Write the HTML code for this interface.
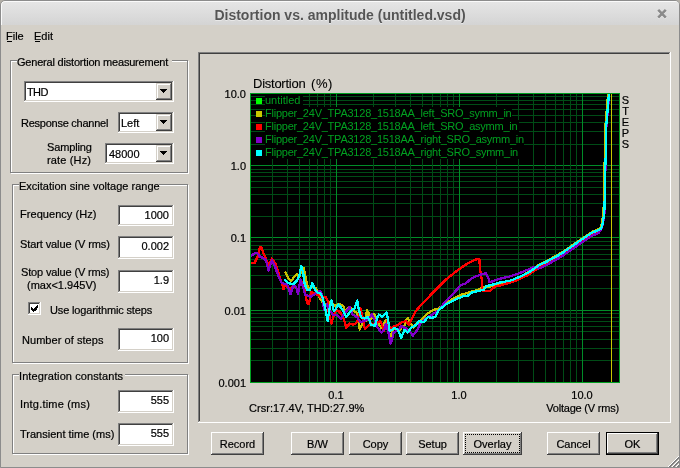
<!DOCTYPE html><html><head><meta charset="utf-8"><style>html,body{margin:0;padding:0;}body{width:680px;height:468px;overflow:hidden;position:relative;background:#b3afa7;}#w{position:absolute;left:0;top:0;width:680px;height:468px;will-change:transform;}</style></head><body><div id="w">
<div style="position:absolute;left:0;top:0;width:678px;height:466px;border:1px solid #8c8c8c;border-radius:5px 5px 0 0;background:#d4d0c8;overflow:hidden;">
<div style="position:absolute;left:0;top:0;width:678px;height:23px;background:linear-gradient(#e5e5e5,#d4d4d4);border-top:1px solid #fafafa;border-left:1px solid #fafafa;border-radius:4px 4px 0 0;"></div>
</div>
<div style="position:absolute;left:0;top:7px;width:680px;text-align:center;font:bold 14px/16px 'Liberation Sans',sans-serif;color:#555555;white-space:pre;text-shadow:0 1px 0 rgba(255,255,255,0.45);">Distortion vs. amplitude (untitled.vsd)</div>
<svg style="position:absolute;left:656px;top:8px" width="12" height="13" viewBox="0 0 12 13"><path d="M2.2 2.6 L9.8 10.4 M9.8 2.6 L2.2 10.4" stroke="#ffffff" stroke-opacity="0.6" stroke-width="2.6"/><path d="M2.2 1.8 L9.8 9.6 M9.8 1.8 L2.2 9.6" stroke="#8a8a8a" stroke-width="2.6"/></svg>
<div style="position:absolute;left:6px;top:30px;font:normal 11px/13px 'Liberation Sans',sans-serif;color:#000;white-space:pre;-webkit-text-stroke-width:0.2px;">File</div>
<div style="position:absolute;left:7px;top:41px;width:5px;height:1px;background:#000;"></div>
<div style="position:absolute;left:34px;top:30px;font:normal 11px/13px 'Liberation Sans',sans-serif;color:#000;white-space:pre;-webkit-text-stroke-width:0.2px;">Edit</div>
<div style="position:absolute;left:35px;top:41px;width:5px;height:1px;background:#000;"></div>
<div style="position:absolute;left:11px;top:61px;width:176px;height:111px;border:1px solid #fff;"></div>
<div style="position:absolute;left:10px;top:60px;width:176px;height:111px;border:1px solid #808080;"></div>
<div style="position:absolute;left:17px;top:58px;width:155px;height:6px;background:#d4d0c8;"></div>
<div style="position:absolute;left:17px;top:56px;font:normal 11px/13px 'Liberation Sans',sans-serif;color:#000;white-space:pre;-webkit-text-stroke-width:0.2px;letter-spacing:-0.2px;">General distortion measurement</div>
<div style="position:absolute;left:24px;top:81px;width:150px;height:21px;background:#fff;"></div>
<div style="position:absolute;left:24px;top:81px;width:149px;height:20px;background:#808080;"></div>
<div style="position:absolute;left:25px;top:82px;width:148px;height:19px;background:#d4d0c8;"></div>
<div style="position:absolute;left:25px;top:82px;width:147px;height:18px;background:#404040;"></div>
<div style="position:absolute;left:26px;top:83px;width:146px;height:17px;background:#fff;"></div>
<div style="position:absolute;left:156px;top:83px;width:16px;height:17px;background:#404040;"></div>
<div style="position:absolute;left:156px;top:83px;width:15px;height:16px;background:#d4d0c8;"></div>
<div style="position:absolute;left:157px;top:84px;width:14px;height:15px;background:#808080;"></div>
<div style="position:absolute;left:157px;top:84px;width:13px;height:14px;background:#fff;"></div>
<div style="position:absolute;left:158px;top:85px;width:12px;height:13px;background:#d4d0c8;"></div>
<div style="position:absolute;left:160px;top:89px;width:7px;height:1px;background:#000;"></div>
<div style="position:absolute;left:161px;top:90px;width:5px;height:1px;background:#000;"></div>
<div style="position:absolute;left:162px;top:91px;width:3px;height:1px;background:#000;"></div>
<div style="position:absolute;left:163px;top:92px;width:1px;height:1px;background:#000;"></div>
<div style="position:absolute;left:27px;top:86px;font:normal 11px/13px 'Liberation Sans',sans-serif;color:#000;white-space:pre;-webkit-text-stroke-width:0.2px;letter-spacing:-0.6px;">THD</div>
<div style="position:absolute;left:21px;top:117px;font:normal 11px/13px 'Liberation Sans',sans-serif;color:#000;white-space:pre;-webkit-text-stroke-width:0.2px;letter-spacing:-0.25px;">Response channel</div>
<div style="position:absolute;left:118px;top:112px;width:56px;height:21px;background:#fff;"></div>
<div style="position:absolute;left:118px;top:112px;width:55px;height:20px;background:#808080;"></div>
<div style="position:absolute;left:119px;top:113px;width:54px;height:19px;background:#d4d0c8;"></div>
<div style="position:absolute;left:119px;top:113px;width:53px;height:18px;background:#404040;"></div>
<div style="position:absolute;left:120px;top:114px;width:52px;height:17px;background:#fff;"></div>
<div style="position:absolute;left:156px;top:114px;width:16px;height:17px;background:#404040;"></div>
<div style="position:absolute;left:156px;top:114px;width:15px;height:16px;background:#d4d0c8;"></div>
<div style="position:absolute;left:157px;top:115px;width:14px;height:15px;background:#808080;"></div>
<div style="position:absolute;left:157px;top:115px;width:13px;height:14px;background:#fff;"></div>
<div style="position:absolute;left:158px;top:116px;width:12px;height:13px;background:#d4d0c8;"></div>
<div style="position:absolute;left:160px;top:120px;width:7px;height:1px;background:#000;"></div>
<div style="position:absolute;left:161px;top:121px;width:5px;height:1px;background:#000;"></div>
<div style="position:absolute;left:162px;top:122px;width:3px;height:1px;background:#000;"></div>
<div style="position:absolute;left:163px;top:123px;width:1px;height:1px;background:#000;"></div>
<div style="position:absolute;left:121px;top:117px;font:normal 11px/13px 'Liberation Sans',sans-serif;color:#000;white-space:pre;-webkit-text-stroke-width:0.2px;">Left</div>
<div style="position:absolute;left:47px;top:141px;font:normal 11px/13px 'Liberation Sans',sans-serif;color:#000;white-space:pre;-webkit-text-stroke-width:0.2px;letter-spacing:-0.15px;">Sampling</div>
<div style="position:absolute;left:47px;top:154px;font:normal 11px/13px 'Liberation Sans',sans-serif;color:#000;white-space:pre;-webkit-text-stroke-width:0.2px;letter-spacing:0.15px;">rate (Hz)</div>
<div style="position:absolute;left:105px;top:143px;width:69px;height:21px;background:#fff;"></div>
<div style="position:absolute;left:105px;top:143px;width:68px;height:20px;background:#808080;"></div>
<div style="position:absolute;left:106px;top:144px;width:67px;height:19px;background:#d4d0c8;"></div>
<div style="position:absolute;left:106px;top:144px;width:66px;height:18px;background:#404040;"></div>
<div style="position:absolute;left:107px;top:145px;width:65px;height:17px;background:#fff;"></div>
<div style="position:absolute;left:156px;top:145px;width:16px;height:17px;background:#404040;"></div>
<div style="position:absolute;left:156px;top:145px;width:15px;height:16px;background:#d4d0c8;"></div>
<div style="position:absolute;left:157px;top:146px;width:14px;height:15px;background:#808080;"></div>
<div style="position:absolute;left:157px;top:146px;width:13px;height:14px;background:#fff;"></div>
<div style="position:absolute;left:158px;top:147px;width:12px;height:13px;background:#d4d0c8;"></div>
<div style="position:absolute;left:160px;top:151px;width:7px;height:1px;background:#000;"></div>
<div style="position:absolute;left:161px;top:152px;width:5px;height:1px;background:#000;"></div>
<div style="position:absolute;left:162px;top:153px;width:3px;height:1px;background:#000;"></div>
<div style="position:absolute;left:163px;top:154px;width:1px;height:1px;background:#000;"></div>
<div style="position:absolute;left:109px;top:148px;font:normal 11px/13px 'Liberation Sans',sans-serif;color:#000;white-space:pre;-webkit-text-stroke-width:0.2px;">48000</div>
<div style="position:absolute;left:13px;top:185px;width:174px;height:177px;border:1px solid #fff;"></div>
<div style="position:absolute;left:12px;top:184px;width:174px;height:177px;border:1px solid #808080;"></div>
<div style="position:absolute;left:19px;top:182px;width:140px;height:6px;background:#d4d0c8;"></div>
<div style="position:absolute;left:19px;top:180px;font:normal 11px/13px 'Liberation Sans',sans-serif;color:#000;white-space:pre;-webkit-text-stroke-width:0.2px;letter-spacing:0.0px;">Excitation sine voltage range</div>
<div style="position:absolute;left:20px;top:208px;font:normal 11px/13px 'Liberation Sans',sans-serif;color:#000;white-space:pre;-webkit-text-stroke-width:0.2px;letter-spacing:0.05px;">Frequency (Hz)</div>
<div style="position:absolute;left:118px;top:205px;width:56px;height:21px;background:#fff;"></div>
<div style="position:absolute;left:118px;top:205px;width:55px;height:20px;background:#808080;"></div>
<div style="position:absolute;left:119px;top:206px;width:54px;height:19px;background:#d4d0c8;"></div>
<div style="position:absolute;left:119px;top:206px;width:53px;height:18px;background:#404040;"></div>
<div style="position:absolute;left:120px;top:207px;width:52px;height:17px;background:#fff;"></div>
<div style="position:absolute;left:109px;top:209px;font:normal 11px/13px 'Liberation Sans',sans-serif;color:#000;white-space:pre;-webkit-text-stroke-width:0.2px;width:60px;text-align:right;">1000</div>
<div style="position:absolute;left:20px;top:238px;font:normal 11px/13px 'Liberation Sans',sans-serif;color:#000;white-space:pre;-webkit-text-stroke-width:0.2px;letter-spacing:-0.1px;">Start value (V rms)</div>
<div style="position:absolute;left:118px;top:236px;width:56px;height:23px;background:#fff;"></div>
<div style="position:absolute;left:118px;top:236px;width:55px;height:22px;background:#808080;"></div>
<div style="position:absolute;left:119px;top:237px;width:54px;height:21px;background:#d4d0c8;"></div>
<div style="position:absolute;left:119px;top:237px;width:53px;height:20px;background:#404040;"></div>
<div style="position:absolute;left:120px;top:238px;width:52px;height:19px;background:#fff;"></div>
<div style="position:absolute;left:109px;top:240px;font:normal 11px/13px 'Liberation Sans',sans-serif;color:#000;white-space:pre;-webkit-text-stroke-width:0.2px;width:60px;text-align:right;">0.002</div>
<div style="position:absolute;left:21px;top:266px;font:normal 11px/13px 'Liberation Sans',sans-serif;color:#000;white-space:pre;-webkit-text-stroke-width:0.2px;letter-spacing:-0.15px;">Stop value (V rms)</div>
<div style="position:absolute;left:27px;top:279px;font:normal 11px/13px 'Liberation Sans',sans-serif;color:#000;white-space:pre;-webkit-text-stroke-width:0.2px;">(max&lt;1.945V)</div>
<div style="position:absolute;left:118px;top:270px;width:56px;height:23px;background:#fff;"></div>
<div style="position:absolute;left:118px;top:270px;width:55px;height:22px;background:#808080;"></div>
<div style="position:absolute;left:119px;top:271px;width:54px;height:21px;background:#d4d0c8;"></div>
<div style="position:absolute;left:119px;top:271px;width:53px;height:20px;background:#404040;"></div>
<div style="position:absolute;left:120px;top:272px;width:52px;height:19px;background:#fff;"></div>
<div style="position:absolute;left:109px;top:274px;font:normal 11px/13px 'Liberation Sans',sans-serif;color:#000;white-space:pre;-webkit-text-stroke-width:0.2px;width:60px;text-align:right;">1.9</div>
<div style="position:absolute;left:28px;top:302px;width:13px;height:13px;background:#fff;"></div>
<div style="position:absolute;left:28px;top:302px;width:12px;height:12px;background:#808080;"></div>
<div style="position:absolute;left:29px;top:303px;width:11px;height:11px;background:#d4d0c8;"></div>
<div style="position:absolute;left:29px;top:303px;width:10px;height:10px;background:#404040;"></div>
<div style="position:absolute;left:30px;top:304px;width:9px;height:9px;background:#fff;"></div>
<svg style="position:absolute;left:31px;top:305px" width="7" height="7" viewBox="0 0 7 7" shape-rendering="crispEdges"><path fill="#000" d="M6 0h1v3h-1zM5 1h1v4h-1zM4 2h1v4h-1zM3 3h1v3h-1zM2 4h1v3h-1zM1 3h1v3h-1zM0 2h1v3h-1z"/></svg>
<div style="position:absolute;left:50px;top:304px;font:normal 11px/13px 'Liberation Sans',sans-serif;color:#000;white-space:pre;-webkit-text-stroke-width:0.2px;letter-spacing:-0.15px;">Use logarithmic steps</div>
<div style="position:absolute;left:22px;top:334px;font:normal 11px/13px 'Liberation Sans',sans-serif;color:#000;white-space:pre;-webkit-text-stroke-width:0.2px;letter-spacing:0.05px;">Number of steps</div>
<div style="position:absolute;left:118px;top:328px;width:56px;height:23px;background:#fff;"></div>
<div style="position:absolute;left:118px;top:328px;width:55px;height:22px;background:#808080;"></div>
<div style="position:absolute;left:119px;top:329px;width:54px;height:21px;background:#d4d0c8;"></div>
<div style="position:absolute;left:119px;top:329px;width:53px;height:20px;background:#404040;"></div>
<div style="position:absolute;left:120px;top:330px;width:52px;height:19px;background:#fff;"></div>
<div style="position:absolute;left:109px;top:332px;font:normal 11px/13px 'Liberation Sans',sans-serif;color:#000;white-space:pre;-webkit-text-stroke-width:0.2px;width:60px;text-align:right;">100</div>
<div style="position:absolute;left:13px;top:375px;width:174px;height:78px;border:1px solid #fff;"></div>
<div style="position:absolute;left:12px;top:374px;width:174px;height:78px;border:1px solid #808080;"></div>
<div style="position:absolute;left:19px;top:372px;width:106px;height:6px;background:#d4d0c8;"></div>
<div style="position:absolute;left:19px;top:370px;font:normal 11px/13px 'Liberation Sans',sans-serif;color:#000;white-space:pre;-webkit-text-stroke-width:0.2px;letter-spacing:0.1px;">Integration constants</div>
<div style="position:absolute;left:20px;top:398px;font:normal 11px/13px 'Liberation Sans',sans-serif;color:#000;white-space:pre;-webkit-text-stroke-width:0.2px;letter-spacing:0.2px;">Intg.time (ms)</div>
<div style="position:absolute;left:118px;top:390px;width:56px;height:23px;background:#fff;"></div>
<div style="position:absolute;left:118px;top:390px;width:55px;height:22px;background:#808080;"></div>
<div style="position:absolute;left:119px;top:391px;width:54px;height:21px;background:#d4d0c8;"></div>
<div style="position:absolute;left:119px;top:391px;width:53px;height:20px;background:#404040;"></div>
<div style="position:absolute;left:120px;top:392px;width:52px;height:19px;background:#fff;"></div>
<div style="position:absolute;left:109px;top:394px;font:normal 11px/13px 'Liberation Sans',sans-serif;color:#000;white-space:pre;-webkit-text-stroke-width:0.2px;width:60px;text-align:right;">555</div>
<div style="position:absolute;left:20px;top:428px;font:normal 11px/13px 'Liberation Sans',sans-serif;color:#000;white-space:pre;-webkit-text-stroke-width:0.2px;letter-spacing:0.0px;">Transient time (ms)</div>
<div style="position:absolute;left:118px;top:423px;width:56px;height:23px;background:#fff;"></div>
<div style="position:absolute;left:118px;top:423px;width:55px;height:22px;background:#808080;"></div>
<div style="position:absolute;left:119px;top:424px;width:54px;height:21px;background:#d4d0c8;"></div>
<div style="position:absolute;left:119px;top:424px;width:53px;height:20px;background:#404040;"></div>
<div style="position:absolute;left:120px;top:425px;width:52px;height:19px;background:#fff;"></div>
<div style="position:absolute;left:109px;top:427px;font:normal 11px/13px 'Liberation Sans',sans-serif;color:#000;white-space:pre;-webkit-text-stroke-width:0.2px;width:60px;text-align:right;">555</div>
<div style="position:absolute;left:198px;top:52px;width:473px;height:371px;background:#fff;"></div>
<div style="position:absolute;left:198px;top:52px;width:472px;height:370px;background:#808080;"></div>
<div style="position:absolute;left:199px;top:53px;width:471px;height:369px;background:#d4d0c8;"></div>
<div style="position:absolute;left:199px;top:53px;width:470px;height:368px;background:#404040;"></div>
<div style="position:absolute;left:200px;top:54px;width:469px;height:367px;background:#d4d0c8;"></div>
<div style="position:absolute;left:253px;top:77px;font:normal 13px/13px 'Liberation Sans',sans-serif;color:#000;white-space:pre;-webkit-text-stroke-width:0.1px;letter-spacing:-0.25px;">Distortion</div>
<div style="position:absolute;left:311px;top:77px;font:normal 13px/13px 'Liberation Sans',sans-serif;color:#000;white-space:pre;-webkit-text-stroke-width:0.1px;letter-spacing:0.6px;">(%)</div>
<div style="position:absolute;left:186px;top:88px;font:normal 11px/13px 'Liberation Sans',sans-serif;color:#000;white-space:pre;-webkit-text-stroke-width:0.2px;width:60px;text-align:right;">10.0</div>
<div style="position:absolute;left:186px;top:160px;font:normal 11px/13px 'Liberation Sans',sans-serif;color:#000;white-space:pre;-webkit-text-stroke-width:0.2px;width:60px;text-align:right;">1.0</div>
<div style="position:absolute;left:186px;top:232px;font:normal 11px/13px 'Liberation Sans',sans-serif;color:#000;white-space:pre;-webkit-text-stroke-width:0.2px;width:60px;text-align:right;">0.1</div>
<div style="position:absolute;left:186px;top:305px;font:normal 11px/13px 'Liberation Sans',sans-serif;color:#000;white-space:pre;-webkit-text-stroke-width:0.2px;width:60px;text-align:right;">0.01</div>
<div style="position:absolute;left:186px;top:377px;font:normal 11px/13px 'Liberation Sans',sans-serif;color:#000;white-space:pre;-webkit-text-stroke-width:0.2px;width:60px;text-align:right;">0.001</div>
<div style="position:absolute;left:306px;top:389px;font:normal 11px/13px 'Liberation Sans',sans-serif;color:#000;white-space:pre;-webkit-text-stroke-width:0.2px;width:60px;text-align:center;">0.1</div>
<div style="position:absolute;left:429px;top:389px;font:normal 11px/13px 'Liberation Sans',sans-serif;color:#000;white-space:pre;-webkit-text-stroke-width:0.2px;width:60px;text-align:center;">1.0</div>
<div style="position:absolute;left:552px;top:389px;font:normal 11px/13px 'Liberation Sans',sans-serif;color:#000;white-space:pre;-webkit-text-stroke-width:0.2px;width:60px;text-align:center;">10.0</div>
<div style="position:absolute;left:249px;top:402px;font:normal 11px/13px 'Liberation Sans',sans-serif;color:#000;white-space:pre;-webkit-text-stroke-width:0.2px;letter-spacing:0.05px;">Crsr:17.4V, THD:27.9%</div>
<div style="position:absolute;left:519px;top:402px;font:normal 11px/13px 'Liberation Sans',sans-serif;color:#000;white-space:pre;-webkit-text-stroke-width:0.2px;letter-spacing:-0.2px;width:100px;text-align:right;">Voltage (V rms)</div>
<div style="position:absolute;left:621px;top:94px;font:normal 11px/13px 'Liberation Sans',sans-serif;color:#000;white-space:pre;-webkit-text-stroke-width:0.2px;width:9px;text-align:center;">S</div>
<div style="position:absolute;left:621px;top:105px;font:normal 11px/13px 'Liberation Sans',sans-serif;color:#000;white-space:pre;-webkit-text-stroke-width:0.2px;width:9px;text-align:center;">T</div>
<div style="position:absolute;left:621px;top:116px;font:normal 11px/13px 'Liberation Sans',sans-serif;color:#000;white-space:pre;-webkit-text-stroke-width:0.2px;width:9px;text-align:center;">E</div>
<div style="position:absolute;left:621px;top:127px;font:normal 11px/13px 'Liberation Sans',sans-serif;color:#000;white-space:pre;-webkit-text-stroke-width:0.2px;width:9px;text-align:center;">P</div>
<div style="position:absolute;left:621px;top:138px;font:normal 11px/13px 'Liberation Sans',sans-serif;color:#000;white-space:pre;-webkit-text-stroke-width:0.2px;width:9px;text-align:center;">S</div>
<svg style="position:absolute;left:250px;top:93px" width="370" height="290" viewBox="250 93 370 290" shape-rendering="crispEdges"><rect x="250" y="93" width="370" height="290" fill="#000"/><rect x="250" y="144" width="370" height="1" fill="#004c16"/><rect x="250" y="131" width="370" height="1" fill="#004c16"/><rect x="250" y="122" width="370" height="1" fill="#004c16"/><rect x="250" y="115" width="370" height="1" fill="#004c16"/><rect x="250" y="109" width="370" height="1" fill="#004c16"/><rect x="250" y="104" width="370" height="1" fill="#004c16"/><rect x="250" y="100" width="370" height="1" fill="#004c16"/><rect x="250" y="96" width="370" height="1" fill="#004c16"/><rect x="250" y="216" width="370" height="1" fill="#004c16"/><rect x="250" y="203" width="370" height="1" fill="#004c16"/><rect x="250" y="194" width="370" height="1" fill="#004c16"/><rect x="250" y="187" width="370" height="1" fill="#004c16"/><rect x="250" y="181" width="370" height="1" fill="#004c16"/><rect x="250" y="176" width="370" height="1" fill="#004c16"/><rect x="250" y="172" width="370" height="1" fill="#004c16"/><rect x="250" y="169" width="370" height="1" fill="#004c16"/><rect x="250" y="288" width="370" height="1" fill="#004c16"/><rect x="250" y="275" width="370" height="1" fill="#004c16"/><rect x="250" y="266" width="370" height="1" fill="#004c16"/><rect x="250" y="259" width="370" height="1" fill="#004c16"/><rect x="250" y="254" width="370" height="1" fill="#004c16"/><rect x="250" y="249" width="370" height="1" fill="#004c16"/><rect x="250" y="245" width="370" height="1" fill="#004c16"/><rect x="250" y="241" width="370" height="1" fill="#004c16"/><rect x="250" y="360" width="370" height="1" fill="#004c16"/><rect x="250" y="348" width="370" height="1" fill="#004c16"/><rect x="250" y="339" width="370" height="1" fill="#004c16"/><rect x="250" y="331" width="370" height="1" fill="#004c16"/><rect x="250" y="326" width="370" height="1" fill="#004c16"/><rect x="250" y="321" width="370" height="1" fill="#004c16"/><rect x="250" y="317" width="370" height="1" fill="#004c16"/><rect x="250" y="313" width="370" height="1" fill="#004c16"/><rect x="250" y="165" width="370" height="1" fill="#008c28"/><rect x="250" y="237" width="370" height="1" fill="#008c28"/><rect x="250" y="310" width="370" height="1" fill="#008c28"/><rect x="272" y="93" width="1" height="290" fill="#004c16"/><rect x="287" y="93" width="1" height="290" fill="#004c16"/><rect x="299" y="93" width="1" height="290" fill="#004c16"/><rect x="309" y="93" width="1" height="290" fill="#004c16"/><rect x="317" y="93" width="1" height="290" fill="#004c16"/><rect x="324" y="93" width="1" height="290" fill="#004c16"/><rect x="330" y="93" width="1" height="290" fill="#004c16"/><rect x="373" y="93" width="1" height="290" fill="#004c16"/><rect x="395" y="93" width="1" height="290" fill="#004c16"/><rect x="410" y="93" width="1" height="290" fill="#004c16"/><rect x="422" y="93" width="1" height="290" fill="#004c16"/><rect x="432" y="93" width="1" height="290" fill="#004c16"/><rect x="440" y="93" width="1" height="290" fill="#004c16"/><rect x="447" y="93" width="1" height="290" fill="#004c16"/><rect x="453" y="93" width="1" height="290" fill="#004c16"/><rect x="496" y="93" width="1" height="290" fill="#004c16"/><rect x="518" y="93" width="1" height="290" fill="#004c16"/><rect x="533" y="93" width="1" height="290" fill="#004c16"/><rect x="545" y="93" width="1" height="290" fill="#004c16"/><rect x="555" y="93" width="1" height="290" fill="#004c16"/><rect x="563" y="93" width="1" height="290" fill="#004c16"/><rect x="570" y="93" width="1" height="290" fill="#004c16"/><rect x="576" y="93" width="1" height="290" fill="#004c16"/><rect x="336" y="93" width="1" height="290" fill="#008c28"/><rect x="459" y="93" width="1" height="290" fill="#008c28"/><rect x="582" y="93" width="1" height="290" fill="#008c28"/><rect x="256" y="98" width="6" height="6" fill="#00ff00"/><rect x="265" y="94" width="38" height="13" fill="#000"/><rect x="256" y="111" width="6" height="6" fill="#c8c800"/><rect x="265" y="107" width="247" height="13" fill="#000"/><rect x="256" y="124" width="6" height="6" fill="#ff0000"/><rect x="265" y="120" width="254" height="13" fill="#000"/><rect x="256" y="137" width="6" height="6" fill="#8000c8"/><rect x="265" y="133" width="259" height="13" fill="#000"/><rect x="256" y="150" width="6" height="6" fill="#00ffff"/><rect x="265" y="146" width="254" height="13" fill="#000"/><rect x="611" y="93" width="1" height="290" fill="#c8c800"/><polyline points="285.3,272.4 288.5,278.2 291.0,281.4 294.2,276.9 296.8,274.4 299.4,276.9 302.0,269.2 303.8,268.0 305.8,278.2 307.7,287.2 310.0,288.5 312.0,287.0 316.0,288.0 320.0,299.0 325.0,305.0 330.0,302.0 335.0,306.0 339.0,303.7 343.0,305.6 345.6,312.0 348.8,307.0 351.4,308.8 357.2,313.3 359.0,322.3 359.7,329.4 363.6,321.0 366.0,321.0 366.8,310.0 368.7,313.3 370.6,319.7 373.8,314.0 375.0,315.3 377.6,322.3 381.4,328.0 383.3,324.9 385.9,319.7 387.2,324.9 389.1,331.3 390.4,337.7 393.0,328.7 395.5,328.7 398.7,331.3 401.9,327.4 405.1,324.9 406.4,319.7 407.7,317.8 409.6,322.3 413.5,327.4 417.3,322.9 421.2,320.4 426.3,314.6 431.4,310.8 435.0,309.5 439.0,308.3 446.7,302.6 453.1,298.7 460.8,294.9 467.2,292.9 473.6,291.0 478.7,289.7 482.6,287.2 486.4,287.2 490.0,286.5 497.8,283.5 504.2,282.0 510.6,280.5 517.0,278.0 523.5,275.0 528.6,272.0 533.7,268.5 538.8,265.0 545.0,261.8 551.5,258.4 561.8,252.5 566.9,249.0 572.8,245.0 579.2,240.5 585.6,236.2 592.0,231.9 595.2,230.6 598.4,229.4 600.3,228.6 601.4,225.7 602.4,220.3 603.5,212.0 603.9,200.0 604.2,173.0 605.2,150.0 605.2,128.0 606.2,117.0 607.2,105.0 608.2,93.0" fill="none" stroke="#c8c000" stroke-width="2.3" stroke-linejoin="round" stroke-linecap="round" shape-rendering="crispEdges"/><polyline points="251.0,263.0 254.5,263.0 258.0,256.0 260.0,247.0 261.5,247.0 263.0,252.0 266.0,259.0 268.6,265.4 271.8,258.5 275.6,264.0 278.8,274.0 282.0,284.0 283.5,289.0 285.3,285.0 290.0,289.0 294.0,286.0 298.0,290.0 301.0,281.0 304.0,287.0 307.0,303.0 309.0,304.0 311.0,292.0 314.0,293.0 319.0,296.0 322.6,298.0 325.8,296.7 327.7,300.5 328.3,310.8 331.5,323.6 333.5,316.0 336.7,309.5 341.0,313.3 343.7,318.5 346.3,328.0 349.5,323.6 353.3,324.9 357.2,322.3 360.4,308.2 362.3,316.0 364.9,329.4 368.0,326.2 371.3,323.6 375.1,324.9 377.6,322.3 380.1,321.0 382.0,324.9 384.0,331.3 387.2,321.0 388.5,326.2 391.7,328.0 394.2,326.2 398.0,324.9 401.9,322.3 405.8,321.0 409.0,324.9 412.2,318.5 416.0,310.8 421.2,305.0 426.3,299.9 431.4,294.1 437.7,287.8 445.4,280.1 453.1,273.7 460.8,268.0 468.5,262.8 474.9,259.6 479.4,259.0 480.0,269.2 481.9,280.8 482.6,291.0 490.0,291.0 495.3,286.4 501.7,285.1 508.0,283.2 514.5,281.3 520.9,278.1 527.3,275.5 533.7,271.0 538.8,267.8 545.0,264.6 551.5,260.4 561.8,254.5 566.9,251.0 572.8,247.0 579.2,242.5 585.6,238.2 592.0,233.9 595.2,232.6 598.4,231.4 601.1,229.8 602.2,226.9 603.2,221.5 604.3,213.2 604.7,201.2 605.0,174.2 606.0,151.2 606.0,129.2 607.0,118.2 608.0,106.2 609.0,94.2" fill="none" stroke="#ff0000" stroke-width="2.3" stroke-linejoin="round" stroke-linecap="round" shape-rendering="crispEdges"/><polyline points="251.3,255.8 253.8,253.8 257.0,252.6 260.3,257.0 262.8,257.7 266.0,260.3 268.6,270.5 271.8,260.3 275.0,266.7 278.2,275.6 281.4,282.7 284.6,284.0 287.2,284.6 290.4,294.2 293.6,284.6 296.2,287.2 298.0,293.6 300.6,279.5 303.2,287.2 305.1,294.9 309.0,296.0 311.0,297.0 316.0,293.0 320.0,291.0 322.0,294.0 324.0,309.5 327.0,304.0 329.0,309.5 331.0,312.0 332.8,314.6 336.7,315.0 341.0,318.5 345.0,313.0 349.5,307.0 352.7,314.6 357.2,317.2 360.4,322.3 364.2,321.0 368.0,319.7 372.0,314.0 374.0,318.5 375.0,321.0 377.6,327.4 381.4,332.6 384.0,330.0 385.9,323.6 387.8,330.0 389.3,337.0 390.5,344.0 392.0,340.0 393.6,332.6 397.4,330.6 401.3,326.2 403.8,327.4 407.0,328.7 410.3,331.9 412.8,335.8 417.3,330.0 419.9,324.2 423.7,320.4 427.6,317.2 431.4,315.3 435.0,312.7 439.0,310.0 445.4,301.3 451.8,294.9 456.9,289.7 460.8,285.3 465.9,283.3 471.0,278.8 476.2,276.3 481.3,274.4 485.8,273.1 488.3,277.6 489.5,282.0 492.7,281.3 497.8,279.4 503.0,278.0 510.6,276.2 518.3,273.6 526.0,270.4 533.7,267.2 538.8,268.5 545.0,265.9 551.5,262.2 561.8,256.3 566.9,252.8 572.8,248.8 579.2,244.3 585.6,240.0 592.0,235.7 595.2,234.4 598.4,233.2 601.4,228.6 602.5,225.7 603.5,220.3 604.6,212.0 605.0,200.0 605.3,173.0 606.3,150.0 606.3,128.0 607.3,117.0 608.3,105.0 609.3,93.0" fill="none" stroke="#8000c8" stroke-width="2.3" stroke-linejoin="round" stroke-linecap="round" shape-rendering="crispEdges"/><polyline points="285.3,280.1 288.5,283.3 293.6,284.0 297.4,280.1 299.4,275.6 301.3,266.0 303.2,273.1 304.5,283.3 307.0,289.7 310.0,289.7 312.3,283.0 314.9,289.5 318.0,293.0 320.0,292.8 322.6,298.0 325.0,307.0 327.7,321.0 329.6,308.0 331.5,300.5 334.0,311.4 338.6,304.4 342.4,309.5 346.3,317.2 350.8,310.8 354.6,308.2 357.2,300.5 358.5,308.2 361.0,317.2 364.2,318.5 368.0,317.2 371.3,324.9 375.0,326.0 377.5,317.0 379.0,314.6 382.0,316.5 386.5,312.7 387.8,318.5 389.7,331.3 391.7,330.0 394.2,328.0 397.4,329.4 401.3,337.7 404.5,330.0 407.7,332.6 410.9,328.0 416.0,324.9 419.2,321.0 423.7,322.3 427.6,317.2 431.4,317.8 435.0,317.2 439.0,310.0 446.7,303.8 455.6,299.4 463.3,296.2 468.5,295.5 472.3,292.3 478.7,291.0 483.8,289.7 486.4,285.9 491.4,285.0 497.8,283.0 504.2,281.8 510.6,280.5 517.0,278.0 523.5,275.0 528.6,272.5 533.7,269.0 538.8,265.5 545.0,262.5 551.5,259.2 561.8,253.3 566.9,249.8 572.8,245.8 579.2,241.3 585.6,237.0 592.0,232.7 595.2,231.4 598.4,230.2 601.1,228.6 602.2,225.7 603.2,220.3 604.3,212.0 604.7,200.0 605.0,173.0 606.0,150.0 606.0,128.0 607.0,117.0 608.0,105.0 609.0,93.0" fill="none" stroke="#00ffff" stroke-width="2.3" stroke-linejoin="round" stroke-linecap="round" shape-rendering="crispEdges"/><rect x="250.5" y="93.5" width="369" height="289" fill="none" stroke="#00a020" stroke-width="1"/></svg>
<div style="position:absolute;left:265px;top:94px;font:normal 11px/13px 'Liberation Sans',sans-serif;color:#00a020;white-space:pre;-webkit-text-stroke-width:0px;letter-spacing:0px;">untitled</div>
<div style="position:absolute;left:265px;top:107px;font:normal 11px/13px 'Liberation Sans',sans-serif;color:#00a020;white-space:pre;-webkit-text-stroke-width:0px;letter-spacing:-0.235px;">Flipper_24V_TPA3128_1518AA_left_SRO_symm_in</div>
<div style="position:absolute;left:265px;top:120px;font:normal 11px/13px 'Liberation Sans',sans-serif;color:#00a020;white-space:pre;-webkit-text-stroke-width:0px;letter-spacing:-0.235px;">Flipper_24V_TPA3128_1518AA_left_SRO_asymm_in</div>
<div style="position:absolute;left:265px;top:133px;font:normal 11px/13px 'Liberation Sans',sans-serif;color:#00a020;white-space:pre;-webkit-text-stroke-width:0px;letter-spacing:-0.235px;">Flipper_24V_TPA3128_1518AA_right_SRO_asymm_in</div>
<div style="position:absolute;left:265px;top:146px;font:normal 11px/13px 'Liberation Sans',sans-serif;color:#00a020;white-space:pre;-webkit-text-stroke-width:0px;letter-spacing:-0.235px;">Flipper_24V_TPA3128_1518AA_right_SRO_symm_in</div>
<div style="position:absolute;left:211px;top:432px;width:53px;height:23px;background:#404040;"></div>
<div style="position:absolute;left:211px;top:432px;width:52px;height:22px;background:#fff;"></div>
<div style="position:absolute;left:212px;top:433px;width:51px;height:21px;background:#808080;"></div>
<div style="position:absolute;left:212px;top:433px;width:50px;height:20px;background:#d4d0c8;"></div>
<div style="position:absolute;left:213px;top:434px;width:49px;height:19px;background:#d4d0c8;"></div>
<div style="position:absolute;left:211px;top:438px;font:normal 11px/13px 'Liberation Sans',sans-serif;color:#000;white-space:pre;-webkit-text-stroke-width:0.2px;width:53px;text-align:center;">Record</div>
<div style="position:absolute;left:291px;top:432px;width:53px;height:23px;background:#404040;"></div>
<div style="position:absolute;left:291px;top:432px;width:52px;height:22px;background:#fff;"></div>
<div style="position:absolute;left:292px;top:433px;width:51px;height:21px;background:#808080;"></div>
<div style="position:absolute;left:292px;top:433px;width:50px;height:20px;background:#d4d0c8;"></div>
<div style="position:absolute;left:293px;top:434px;width:49px;height:19px;background:#d4d0c8;"></div>
<div style="position:absolute;left:291px;top:438px;font:normal 11px/13px 'Liberation Sans',sans-serif;color:#000;white-space:pre;-webkit-text-stroke-width:0.2px;width:53px;text-align:center;">B/W</div>
<div style="position:absolute;left:349px;top:432px;width:53px;height:23px;background:#404040;"></div>
<div style="position:absolute;left:349px;top:432px;width:52px;height:22px;background:#fff;"></div>
<div style="position:absolute;left:350px;top:433px;width:51px;height:21px;background:#808080;"></div>
<div style="position:absolute;left:350px;top:433px;width:50px;height:20px;background:#d4d0c8;"></div>
<div style="position:absolute;left:351px;top:434px;width:49px;height:19px;background:#d4d0c8;"></div>
<div style="position:absolute;left:349px;top:438px;font:normal 11px/13px 'Liberation Sans',sans-serif;color:#000;white-space:pre;-webkit-text-stroke-width:0.2px;width:53px;text-align:center;">Copy</div>
<div style="position:absolute;left:406px;top:432px;width:53px;height:23px;background:#404040;"></div>
<div style="position:absolute;left:406px;top:432px;width:52px;height:22px;background:#fff;"></div>
<div style="position:absolute;left:407px;top:433px;width:51px;height:21px;background:#808080;"></div>
<div style="position:absolute;left:407px;top:433px;width:50px;height:20px;background:#d4d0c8;"></div>
<div style="position:absolute;left:408px;top:434px;width:49px;height:19px;background:#d4d0c8;"></div>
<div style="position:absolute;left:406px;top:438px;font:normal 11px/13px 'Liberation Sans',sans-serif;color:#000;white-space:pre;-webkit-text-stroke-width:0.2px;width:53px;text-align:center;">Setup</div>
<div style="position:absolute;left:463px;top:432px;width:59px;height:23px;background:#404040;"></div>
<div style="position:absolute;left:463px;top:432px;width:58px;height:22px;background:#fff;"></div>
<div style="position:absolute;left:464px;top:433px;width:57px;height:21px;background:#808080;"></div>
<div style="position:absolute;left:464px;top:433px;width:56px;height:20px;background:#d4d0c8;"></div>
<div style="position:absolute;left:465px;top:434px;width:55px;height:19px;background:#d4d0c8;"></div>
<div style="position:absolute;left:465px;top:434px;width:53px;height:17px;border:1px dotted #000;"></div>
<div style="position:absolute;left:463px;top:438px;font:normal 11px/13px 'Liberation Sans',sans-serif;color:#000;white-space:pre;-webkit-text-stroke-width:0.2px;width:59px;text-align:center;">Overlay</div>
<div style="position:absolute;left:547px;top:432px;width:53px;height:23px;background:#404040;"></div>
<div style="position:absolute;left:547px;top:432px;width:52px;height:22px;background:#fff;"></div>
<div style="position:absolute;left:548px;top:433px;width:51px;height:21px;background:#808080;"></div>
<div style="position:absolute;left:548px;top:433px;width:50px;height:20px;background:#d4d0c8;"></div>
<div style="position:absolute;left:549px;top:434px;width:49px;height:19px;background:#d4d0c8;"></div>
<div style="position:absolute;left:547px;top:438px;font:normal 11px/13px 'Liberation Sans',sans-serif;color:#000;white-space:pre;-webkit-text-stroke-width:0.2px;width:53px;text-align:center;">Cancel</div>
<div style="position:absolute;left:606px;top:432px;width:53px;height:23px;background:#000;"></div>
<div style="position:absolute;left:607px;top:433px;width:51px;height:21px;background:#404040;"></div>
<div style="position:absolute;left:607px;top:433px;width:50px;height:20px;background:#fff;"></div>
<div style="position:absolute;left:608px;top:434px;width:49px;height:19px;background:#808080;"></div>
<div style="position:absolute;left:608px;top:434px;width:48px;height:18px;background:#d4d0c8;"></div>
<div style="position:absolute;left:609px;top:435px;width:47px;height:17px;background:#d4d0c8;"></div>
<div style="position:absolute;left:606px;top:438px;font:normal 11px/13px 'Liberation Sans',sans-serif;color:#000;white-space:pre;-webkit-text-stroke-width:0.2px;width:53px;text-align:center;">OK</div>
<svg style="position:absolute;left:666px;top:454px" width="13" height="13" viewBox="0 0 13 13" shape-rendering="crispEdges"><rect x="2" y="12" width="1" height="1" fill="#fff"/><rect x="3" y="12" width="1" height="1" fill="#808080"/><rect x="4" y="12" width="1" height="1" fill="#808080"/><rect x="3" y="11" width="1" height="1" fill="#fff"/><rect x="4" y="11" width="1" height="1" fill="#808080"/><rect x="5" y="11" width="1" height="1" fill="#808080"/><rect x="4" y="10" width="1" height="1" fill="#fff"/><rect x="5" y="10" width="1" height="1" fill="#808080"/><rect x="6" y="10" width="1" height="1" fill="#808080"/><rect x="5" y="9" width="1" height="1" fill="#fff"/><rect x="6" y="9" width="1" height="1" fill="#808080"/><rect x="7" y="9" width="1" height="1" fill="#808080"/><rect x="6" y="8" width="1" height="1" fill="#fff"/><rect x="7" y="8" width="1" height="1" fill="#808080"/><rect x="8" y="8" width="1" height="1" fill="#808080"/><rect x="7" y="7" width="1" height="1" fill="#fff"/><rect x="8" y="7" width="1" height="1" fill="#808080"/><rect x="9" y="7" width="1" height="1" fill="#808080"/><rect x="8" y="6" width="1" height="1" fill="#fff"/><rect x="9" y="6" width="1" height="1" fill="#808080"/><rect x="10" y="6" width="1" height="1" fill="#808080"/><rect x="9" y="5" width="1" height="1" fill="#fff"/><rect x="10" y="5" width="1" height="1" fill="#808080"/><rect x="11" y="5" width="1" height="1" fill="#808080"/><rect x="10" y="4" width="1" height="1" fill="#fff"/><rect x="11" y="4" width="1" height="1" fill="#808080"/><rect x="12" y="4" width="1" height="1" fill="#808080"/><rect x="11" y="3" width="1" height="1" fill="#fff"/><rect x="12" y="3" width="1" height="1" fill="#808080"/><rect x="12" y="2" width="1" height="1" fill="#fff"/><rect x="6" y="12" width="1" height="1" fill="#fff"/><rect x="7" y="12" width="1" height="1" fill="#808080"/><rect x="8" y="12" width="1" height="1" fill="#808080"/><rect x="7" y="11" width="1" height="1" fill="#fff"/><rect x="8" y="11" width="1" height="1" fill="#808080"/><rect x="9" y="11" width="1" height="1" fill="#808080"/><rect x="8" y="10" width="1" height="1" fill="#fff"/><rect x="9" y="10" width="1" height="1" fill="#808080"/><rect x="10" y="10" width="1" height="1" fill="#808080"/><rect x="9" y="9" width="1" height="1" fill="#fff"/><rect x="10" y="9" width="1" height="1" fill="#808080"/><rect x="11" y="9" width="1" height="1" fill="#808080"/><rect x="10" y="8" width="1" height="1" fill="#fff"/><rect x="11" y="8" width="1" height="1" fill="#808080"/><rect x="12" y="8" width="1" height="1" fill="#808080"/><rect x="11" y="7" width="1" height="1" fill="#fff"/><rect x="12" y="7" width="1" height="1" fill="#808080"/><rect x="12" y="6" width="1" height="1" fill="#fff"/><rect x="10" y="12" width="1" height="1" fill="#fff"/><rect x="11" y="12" width="1" height="1" fill="#808080"/><rect x="12" y="12" width="1" height="1" fill="#808080"/><rect x="11" y="11" width="1" height="1" fill="#fff"/><rect x="12" y="11" width="1" height="1" fill="#808080"/><rect x="12" y="10" width="1" height="1" fill="#fff"/></svg>
</div></body></html>
